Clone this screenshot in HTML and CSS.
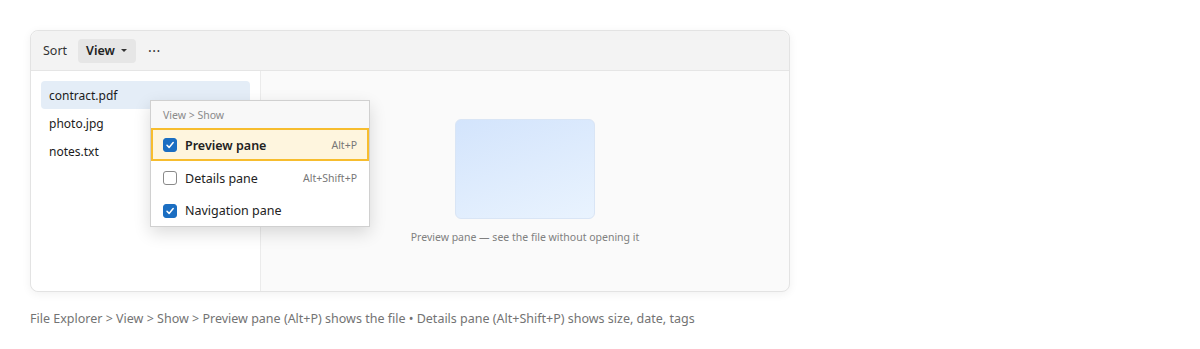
FILE: index.html
```html
<!DOCTYPE html>
<html>
<head>
<meta charset="utf-8">
<link rel="stylesheet" href="styles.css">
</head>
<body>
<div class="page">
  <div class="window">
    <div class="toolbar">
      <span class="tb-item">Sort</span>
      <span class="tb-btn">View <span class="caret"></span></span>
      <span class="tb-more">···</span>
    </div>
    <div class="body">
      <div class="sidebar">
        <div class="file selected">contract.pdf</div>
        <div class="file">photo.jpg</div>
        <div class="file">notes.txt</div>
      </div>
      <div class="preview">
        <div class="thumb"></div>
        <div class="caption">Preview pane — see the file without opening it</div>
      </div>
      <div class="menu">
        <div class="menu-head">View &gt; Show</div>
        <div class="menu-item active">
          <span class="check on"><svg viewBox="0 0 14 14" width="14" height="14"><path d="M4 7.3 L6.1 9.4 L10.2 4.6" fill="none" stroke="#fff" stroke-width="1.5" stroke-linecap="round" stroke-linejoin="round"/></svg></span>
          <span class="label strong">Preview pane</span>
          <span class="key">Alt+P</span>
        </div>
        <div class="menu-item">
          <span class="check"></span>
          <span class="label">Details pane</span>
          <span class="key">Alt+Shift+P</span>
        </div>
        <div class="menu-item last">
          <span class="check on"><svg viewBox="0 0 14 14" width="14" height="14"><path d="M4 7.3 L6.1 9.4 L10.2 4.6" fill="none" stroke="#fff" stroke-width="1.5" stroke-linecap="round" stroke-linejoin="round"/></svg></span>
          <span class="label">Navigation pane</span>
        </div>
      </div>
    </div>
  </div>
  <div class="footer">File Explorer &gt; View &gt; Show &gt; Preview pane (Alt+P) shows the file • Details pane (Alt+Shift+P) shows size, date, tags</div>
</div>
</body>
</html>
```

FILE: styles.css
```css
* { box-sizing: border-box; }
html, body { margin: 0; padding: 0; background: #fff; }
body { font-family: "Noto Sans", "Open Sans", sans-serif; color: #1b1b1b; }
.page { padding: 30px 0 0 30px; }
.window {
  width: 760px;
  height: 262px;
  border: 1px solid #e3e3e3;
  border-radius: 8px;
  background: #fafafa;
  box-shadow: 0 2px 10px rgba(0,0,0,0.06);
  display: flex;
  flex-direction: column;
}
.toolbar {
  height: 40px;
  flex: none;
  background: #f3f3f3;
  border-bottom: 1px solid #e5e5e5;
  border-radius: 8px 8px 0 0;
  display: flex;
  align-items: center;
  padding-left: 12px;
  font-size: 12.5px;
}
.tb-item { color: #333; margin-right: 11px; }
.tb-btn {
  background: #e6e6e6;
  border-radius: 4px;
  padding: 3px 9px 4px 8px;
  font-weight: 600;
  color: #222;
  display: inline-flex;
  align-items: center;
}
.caret {
  display: inline-block;
  width: 0; height: 0;
  border-left: 3px solid transparent;
  border-right: 3px solid transparent;
  border-top: 3px solid #333;
  margin-left: 6px;
}
.tb-more { margin-left: 12px; color: #333; font-size: 14px; letter-spacing: 0.5px; }
.body { flex: 1; display: flex; position: relative; }
.sidebar {
  width: 230px;
  background: #fff;
  border-right: 1px solid #ebebeb;
  border-radius: 0 0 0 8px;
  padding: 10px 10px 0 10px;
}
.file {
  height: 28px;
  line-height: 30px;
  padding-left: 8px;
  font-size: 12px;
  color: #1b1b1b;
  border-radius: 4px;
}
.file.selected { background: #e4edf7; }
.preview {
  flex: 1;
  display: flex;
  flex-direction: column;
  align-items: center;
  padding-top: 48px;
}
.thumb {
  width: 140px;
  height: 100px;
  border-radius: 6px;
  border: 1px solid #d9e5f5;
  background: linear-gradient(160deg, #d3e4fc 0%, #e9f3fe 100%);
}
.caption { margin-top: 11px; font-size: 10.5px; color: #808080; }
.menu {
  position: absolute;
  left: 119px;
  top: 29px;
  width: 220px;
  background: #fff;
  border: 1px solid #d0d0d0;
  box-shadow: 0 6px 16px rgba(0,0,0,0.14);
}
.menu-head {
  height: 27px;
  line-height: 29px;
  padding-left: 12px;
  font-size: 10.5px;
  color: #8a8a8a;
  background: #f8f8f8;
}
.menu-item {
  height: 33px;
  display: flex;
  align-items: center;
  padding: 1px 10px 0 10px;
  font-size: 12.5px;
  color: #222;
  border: 2px solid transparent;
}
.menu-item.last { height: 32px; }
.menu-item.active { background: #fef5de; border-color: #f7bd2e; }
.check {
  width: 14px; height: 14px;
  border: 1px solid #8a8a8a;
  border-radius: 3px;
  margin-right: 8px;
  display: inline-flex;
}
.check.on { background: #1b6ec2; border-color: #1b6ec2; }
.check svg { margin: -1px; }
.label { flex: 1; }
.label.strong { font-weight: 600; }
.key { font-size: 10.5px; color: #777; }
.footer { margin-top: 18px; font-size: 12.5px; color: #737373; }
```
